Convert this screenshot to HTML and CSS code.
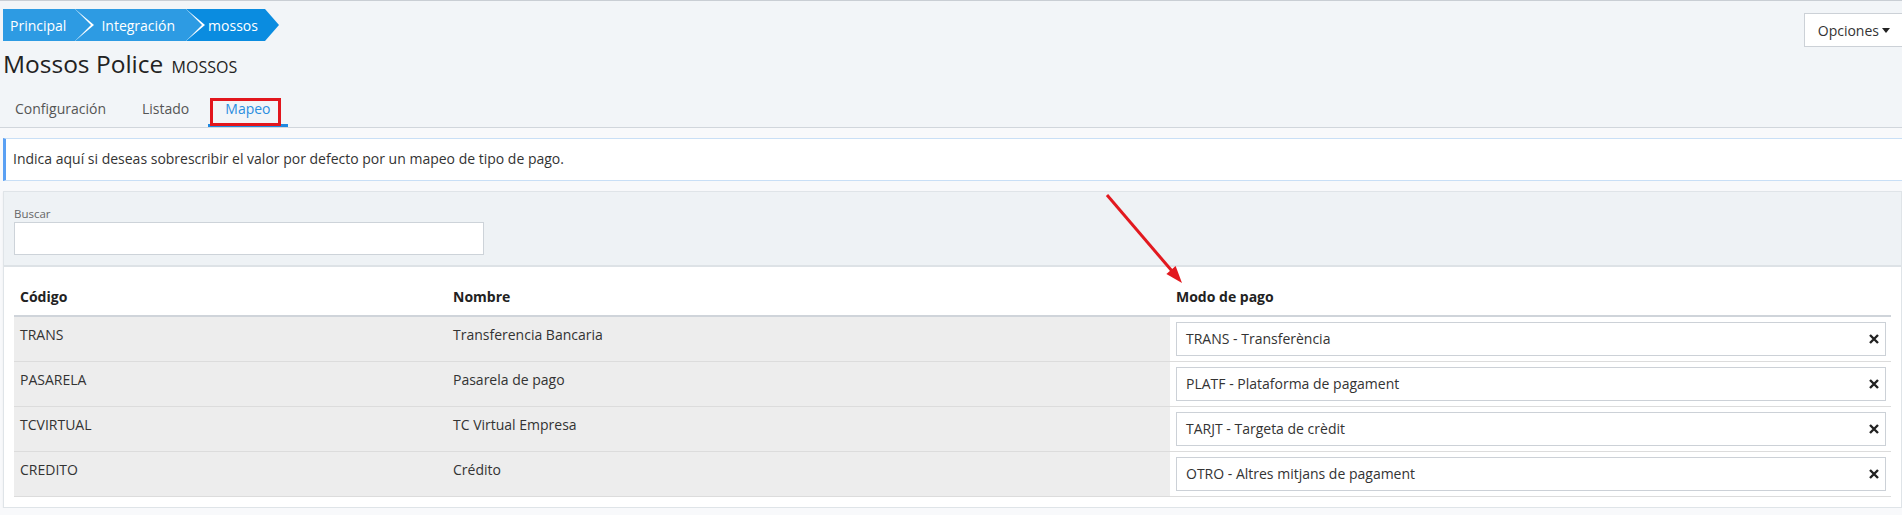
FILE: index.html
```html
<!DOCTYPE html>
<html lang="es">
<head>
<meta charset="utf-8">
<title>Mossos Police - Mapeo</title>
<link rel="stylesheet" href="styles.css">
</head>
<body>
<header class="page-header">
  <div class="header-main">
    <nav class="crumbs">
      <a class="crumb crumb-first">Principal</a>
      <a class="crumb">Integración</a>
      <a class="crumb crumb-current">mossos</a>
    </nav>
    <h1 class="title">Mossos Police <small class="title-code">MOSSOS</small></h1>
    <ul class="tabs">
      <li class="tab">Configuración</li>
      <li class="tab">Listado</li>
      <li class="tab tab-active">Mapeo<span class="mark-box"></span></li>
    </ul>
  </div>
  <button class="options-btn">Opciones <span class="caret"></span></button>
</header>

<main class="content">
  <div class="info">Indica aquí si deseas sobrescribir el valor por defecto por un mapeo de tipo de pago.</div>

  <section class="panel">
    <div class="filters">
      <label class="filter-label">Buscar</label>
      <input class="filter-input" type="text">
    </div>
    <div class="panel-body">
      <table class="map-table">
        <colgroup>
          <col class="col-code">
          <col class="col-name">
          <col>
        </colgroup>
        <thead>
          <tr>
            <th>Código</th>
            <th>Nombre</th>
            <th>Modo de pago</th>
          </tr>
        </thead>
        <tbody>
          <tr>
            <td class="cell-text">TRANS</td>
            <td class="cell-text">Transferencia Bancaria</td>
            <td class="cell-select"><div class="select"><span>TRANS - Transferència</span><svg class="clear" viewBox="0 0 10 10"><path d="M1 1L9 9M9 1L1 9"/></svg></div></td>
          </tr>
          <tr>
            <td class="cell-text">PASARELA</td>
            <td class="cell-text">Pasarela de pago</td>
            <td class="cell-select"><div class="select"><span>PLATF - Plataforma de pagament</span><svg class="clear" viewBox="0 0 10 10"><path d="M1 1L9 9M9 1L1 9"/></svg></div></td>
          </tr>
          <tr>
            <td class="cell-text">TCVIRTUAL</td>
            <td class="cell-text">TC Virtual Empresa</td>
            <td class="cell-select"><div class="select"><span>TARJT - Targeta de crèdit</span><svg class="clear" viewBox="0 0 10 10"><path d="M1 1L9 9M9 1L1 9"/></svg></div></td>
          </tr>
          <tr>
            <td class="cell-text">CREDITO</td>
            <td class="cell-text">Crédito</td>
            <td class="cell-select"><div class="select"><span>OTRO - Altres mitjans de pagament</span><svg class="clear" viewBox="0 0 10 10"><path d="M1 1L9 9M9 1L1 9"/></svg></div></td>
          </tr>
        </tbody>
      </table>
    </div>
  </section>
</main>

<svg class="annot-arrow" viewBox="0 0 90 100" width="90" height="100">
  <line x1="7" y1="5" x2="72" y2="81"/>
  <polygon points="82,93 66.4,83.9 75.6,76.1"/>
</svg>
</body>
</html>
```

FILE: styles.css
```css
* { box-sizing: border-box; }

html, body {
  margin: 0;
  padding: 0;
}

body {
  background: #f8f9fb;
  font-family: "Open Sans", "Liberation Sans", sans-serif;
  font-size: 14px;
  color: #333;
  overflow: hidden;
  position: relative;
}

/* ---------- header ---------- */
.page-header {
  display: grid;
  grid-template-columns: 1fr auto;
  align-items: start;
  background: #f2f5f8;
  border-top: 1px solid #c9ced4;
  border-bottom: 1px solid #d1d6dc;
  padding: 8px 0 0 3px;
}

.crumbs {
  display: flex;
  height: 32px;
}

.crumb {
  position: relative;
  display: flex;
  align-items: center;
  height: 32px;
  padding: 0 9px 0 26px;
  background: #2d9be3;
  color: #fff;
  font-size: 14px;
  text-decoration: none;
}

.crumb-first {
  padding-left: 7px;
  z-index: 3;
}

.crumb:nth-child(2) { z-index: 2; padding-right: 11px; }

.crumb-current {
  background: #0a8ce0;
  z-index: 1;
  padding-left: 22px;
  padding-right: 7px;
}

.crumb::before,
.crumb::after {
  content: "";
  position: absolute;
  top: 0;
  border-top: 16px solid transparent;
  border-bottom: 16px solid transparent;
}

.crumb::before {
  right: -19px;
  border-left: 19px solid #fff;
}

.crumb::after {
  right: -16px;
  border-left: 16px solid #2d9be3;
}

.crumb-current::before { display: none; }
.crumb-current::after { border-left-color: #0a8ce0; right: -14px; border-left-width: 14px; }

.title {
  margin: 4px 0 0;
  font-size: 24.5px;
  line-height: 38px;
  height: 38px;
  font-weight: 400;
  color: #222;
}

.title-code {
  font-size: 16px;
  line-height: 1;
  margin-left: 2px;
  color: #222;
}

.tabs {
  list-style: none;
  display: flex;
  gap: 2px;
  margin: 10px 0 0 -5px;
  padding: 0;
}

.tab {
  position: relative;
  padding: 7px 17px 6px;
  font-size: 14px;
  line-height: 18px;
  color: #555;
  border-bottom: 3px solid transparent;
}

.tab-active {
  color: #2a8ee0;
  border-bottom-color: #1e88e0;
}

.mark-box {
  position: absolute;
  left: 2px;
  right: 7px;
  top: 5px;
  bottom: -2px;
  border: 3px solid #e2161d;
}

.options-btn {
  margin: 4px -1px 0 0;
  height: 34px;
  padding: 0 12px 0 13px;
  background: #fff;
  border: 1px solid #ccd1d7;
  font-family: inherit;
  font-size: 14px;
  color: #333;
  display: flex;
  align-items: center;
}

.caret {
  display: inline-block;
  margin-left: 3px;
  border-top: 5px solid #222;
  border-left: 4px solid transparent;
  border-right: 4px solid transparent;
}

/* ---------- content ---------- */
.content {
  padding: 0 0 0 3px;
}

.info {
  margin-top: 10px;
  background: #fff;
  border-top: 1px solid #c9dff6;
  border-bottom: 1px solid #c9dff6;
  border-left: 3px solid #5aa0f3;
  padding: 10px 8px 11px 7px;
  line-height: 20px;
  font-size: 14px;
  color: #333;
}

.panel {
  margin-top: 10px;
  border: 1px solid #dfe4e8;
  background: #fff;
  box-shadow: 0 1px 2px rgba(0, 0, 0, 0.06);
}

.filters {
  background: #eef2f5;
  padding: 14px 10px 10px;
  border-bottom: 2px solid #dde2e6;
}

.filter-label {
  display: block;
  font-size: 11.5px;
  line-height: 16px;
  color: #666;
}

.filter-input {
  display: block;
  width: 470px;
  height: 33px;
  border: 1px solid #cdd3d9;
  background: #fff;
  margin: 0;
}

.panel-body {
  padding: 10px 10px 10px;
}

.map-table {
  width: 100%;
  border-collapse: separate;
  border-spacing: 0;
  table-layout: fixed;
}

.col-code { width: 433px; }
.col-name { width: 723px; }

.map-table th {
  text-align: left;
  padding: 10px 6px 8px;
  font-size: 14px;
  line-height: 20px;
  font-weight: 700;
  color: #222;
  border-bottom: 2px solid #cfd4da;
}

.map-table td {
  border-bottom: 1px solid #dcdcdc;
  font-size: 14px;
  line-height: 20px;
  color: #333;
}

.cell-text {
  background: #ededed;
  vertical-align: top;
  padding: 8px 6px 5px;
}

.cell-select {
  padding: 5px 5px 5px 6px;
  vertical-align: top;
}

.select {
  display: flex;
  align-items: center;
  justify-content: space-between;
  height: 34px;
  border: 1px solid #ccd1d7;
  background: #fff;
  padding: 0 6px 0 9px;
}

.clear {
  width: 10px;
  height: 10px;
  fill: none;
  stroke: #222;
  stroke-width: 2.4;
}

/* ---------- annotation arrow ---------- */
.annot-arrow {
  position: absolute;
  left: 1100px;
  top: 190px;
}

.annot-arrow line {
  stroke: #e2191f;
  stroke-width: 3;
}

.annot-arrow polygon {
  fill: #e2191f;
}
```
